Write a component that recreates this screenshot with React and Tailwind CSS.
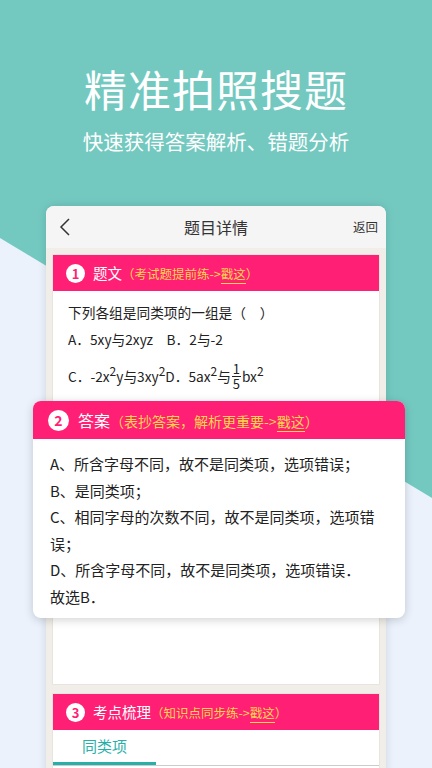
const font = { fontFamily: '"Noto Sans CJK SC", "Noto Sans", sans-serif' }

const Badge = ({ n, size = 'w-[19px] h-[19px] text-[13px]' }) => (
  <span className={`${size} rounded-full bg-white text-[#ff1f74] flex items-center justify-center font-bold leading-none shrink-0`}>
    {n}
  </span>
)

const Hint = ({ children }) => (
  <span className="text-[#ffd64a]">
    （{children}-&gt;<span className="border-b border-[#ffd64a] leading-none">戳这</span>）
  </span>
)

const Sup = ({ children }) => <span className="inline-block text-[12px] leading-none relative -top-[6px]">{children}</span>

export default function App() {
  return (
    <div className="relative w-[432px] h-[768px] overflow-hidden bg-[#73c9c0]" style={font}>
      <svg className="absolute inset-0" width="432" height="768" viewBox="0 0 432 768">
        <polygon points="0,238 432,498 432,768 0,768" fill="#ebf2fc" />
      </svg>

      <div className="relative flex flex-col items-center pt-[60px]">
        <h1 className="text-white text-[43px] leading-[56px] tracking-[1px]">精准拍照搜题</h1>
        <p className="text-white text-[20.5px] leading-[30px] mt-[10px]">快速获得答案解析、错题分析</p>
      </div>

      <div className="relative mx-[46px] mt-[50px] w-[340px] rounded-t-[8px] bg-[#f1eee9] shadow-[0_0_10px_rgba(0,0,0,0.12)] overflow-hidden">
        <div className="h-[42px] bg-[#f5f5f5] flex items-center px-[10px] relative">
          <svg width="14" height="20" viewBox="0 0 14 20" className="ml-[2px]">
            <path d="M11 2 L3 10 L11 18" fill="none" stroke="#333" strokeWidth="1.5" />
          </svg>
          <span className="absolute left-0 right-0 text-center text-[16px] text-[#333] pointer-events-none">题目详情</span>
          <span className="ml-auto text-[12.5px] text-[#333] mr-[-2px]">返回</span>
        </div>

        <div className="px-[6px] pt-[6px] pb-[8px]">
          <div className="bg-white border border-[#e8e4de]">
            <div className="h-[36px] bg-[#ff1f74] flex items-center pl-[13px] gap-[8px]">
              <Badge n="1" />
              <span className="text-[14.5px] text-white">题文<span className="text-[12.5px]"><Hint>考试题提前练</Hint></span></span>
            </div>
            <div className="h-[393px] px-[15px] pt-[10px] text-[13.7px] text-[#222]">
              <p className="leading-[22px]">下列各组是同类项的一组是（　）</p>
              <p className="leading-[22px] mt-[5px]">A．5xy与2xyz　B．2与-2</p>
              <div className="flex items-center mt-[7px] h-[34px] pt-[4px]">
                <span>C．-2x<Sup>2</Sup>y与3xy<Sup>2</Sup>D．5ax<Sup>2</Sup>与</span>
                <span className="inline-flex flex-col items-center text-[13px] leading-[14px] mx-[1px]">
                  <span>1</span>
                  <span className="w-[9px] border-t border-[#222]"></span>
                  <span>5</span>
                </span>
                <span>bx<Sup>2</Sup></span>
              </div>
            </div>
          </div>

          <div className="bg-white border border-[#e8e4de] mt-[8px]">
            <div className="h-[36px] bg-[#ff1f74] flex items-center pl-[13px] gap-[8px]">
              <Badge n="3" />
              <span className="text-[14.5px] text-white">考点梳理<span className="text-[12.5px]"><Hint>知识点同步练</Hint></span></span>
            </div>
            <div className="flex border-b border-[#ccc]">
              <div className="w-[103px] h-[35px] flex items-center justify-center text-[15px] text-[#27b0a8] border-b-[3px] border-[#27b0a8]">
                同类项
              </div>
            </div>
            <div className="h-[40px]"></div>
          </div>
        </div>
      </div>

      <div className="absolute left-[33px] top-[401px] w-[372px] h-[217px] rounded-[8px] bg-white overflow-hidden shadow-[0_2px_10px_rgba(0,0,0,0.18)]">
        <div className="h-[38px] bg-[#ff1f74] flex items-center pl-[15px] gap-[9px]">
          <Badge n="2" size="w-[21px] h-[21px] text-[14px]" />
          <span className="text-[16px] text-white">答案<span className="text-[14px]"><Hint>表抄答案，解析更重要</Hint></span></span>
        </div>
        <div className="px-[17px] pt-[12px] text-[15px] leading-[26.6px] text-[#222]">
          <p>A、所含字母不同，故不是同类项，选项错误；</p>
          <p>B、是同类项；</p>
          <p>C、相同字母的次数不同，故不是同类项，选项错误；</p>
          <p>D、所含字母不同，故不是同类项，选项错误．</p>
          <p>故选B．</p>
        </div>
      </div>
    </div>
  )
}
